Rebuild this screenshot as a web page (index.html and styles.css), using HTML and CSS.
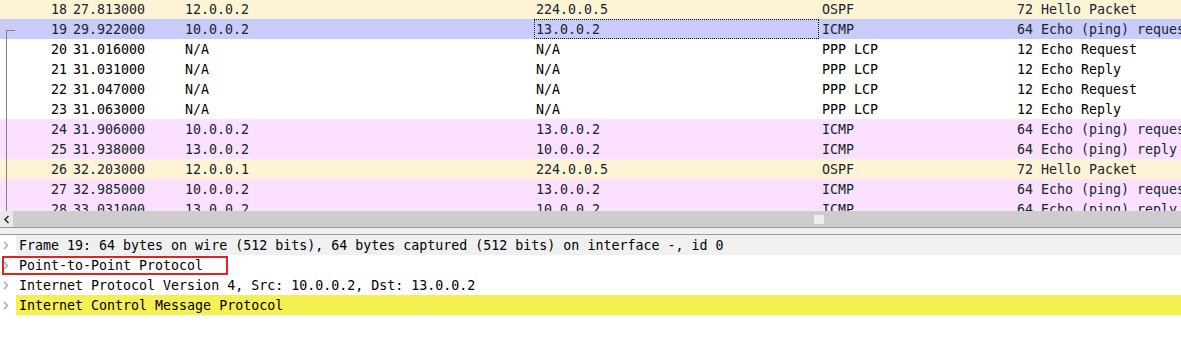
FILE: index.html
```html
<!DOCTYPE html>
<html lang="en">
<head>
    <meta charset="UTF-8">
    <title>Packet capture</title>
    <link rel="stylesheet" href="styles.css">
</head>
<body>
    <div class="packet-list">
        <div class="rows">
            <div class="pkt ospf"><span class="no">18</span><span>27.813000</span><span>12.0.0.2</span><span class="dst">224.0.0.5</span><span>OSPF</span><span class="len">72</span><span class="info">Hello Packet</span></div>
            <div class="pkt selected"><span class="no">19</span><span>29.922000</span><span>10.0.0.2</span><span class="dst focus">13.0.0.2</span><span>ICMP</span><span class="len">64</span><span class="info">Echo (ping) request  id=0x0001, seq=1/256, ttl=255</span></div>
            <div class="pkt"><span class="no">20</span><span>31.016000</span><span>N/A</span><span class="dst">N/A</span><span>PPP LCP</span><span class="len">12</span><span class="info">Echo Request</span></div>
            <div class="pkt"><span class="no">21</span><span>31.031000</span><span>N/A</span><span class="dst">N/A</span><span>PPP LCP</span><span class="len">12</span><span class="info">Echo Reply</span></div>
            <div class="pkt"><span class="no">22</span><span>31.047000</span><span>N/A</span><span class="dst">N/A</span><span>PPP LCP</span><span class="len">12</span><span class="info">Echo Request</span></div>
            <div class="pkt"><span class="no">23</span><span>31.063000</span><span>N/A</span><span class="dst">N/A</span><span>PPP LCP</span><span class="len">12</span><span class="info">Echo Reply</span></div>
            <div class="pkt icmp"><span class="no">24</span><span>31.906000</span><span>10.0.0.2</span><span class="dst">13.0.0.2</span><span>ICMP</span><span class="len">64</span><span class="info">Echo (ping) request  id=0x0002, seq=2/512, ttl=255</span></div>
            <div class="pkt icmp"><span class="no">25</span><span>31.938000</span><span>13.0.0.2</span><span class="dst">10.0.0.2</span><span>ICMP</span><span class="len">64</span><span class="info">Echo (ping) reply    id=0x0002, seq=2/512, ttl=254</span></div>
            <div class="pkt ospf"><span class="no">26</span><span>32.203000</span><span>12.0.0.1</span><span class="dst">224.0.0.5</span><span>OSPF</span><span class="len">72</span><span class="info">Hello Packet</span></div>
            <div class="pkt icmp"><span class="no">27</span><span>32.985000</span><span>10.0.0.2</span><span class="dst">13.0.0.2</span><span>ICMP</span><span class="len">64</span><span class="info">Echo (ping) request  id=0x0003, seq=3/768, ttl=255</span></div>
            <div class="pkt icmp"><span class="no">28</span><span>33.031000</span><span>13.0.0.2</span><span class="dst">10.0.0.2</span><span>ICMP</span><span class="len">64</span><span class="info">Echo (ping) reply    id=0x0003, seq=3/768, ttl=254</span></div>
        </div>
        <div class="related"></div>
    </div>

    <div class="hscroll">
        <div class="arrow-btn">
            <svg width="8" height="9" viewBox="0 0 8 9"><path d="M5.5 1 L2 4.5 L5.5 8" fill="none" stroke="#333" stroke-width="1.6"/></svg>
        </div>
        <div class="track"><div class="thumb"></div></div>
    </div>

    <div class="splitter"></div>

    <div class="tree">
        <div class="node hover">
            <svg class="chev" width="6" height="9" viewBox="0 0 6 9"><path d="M1 1 L4.5 4.5 L1 8" fill="none" stroke="#a6a6a6" stroke-width="1.4"/></svg>
            <span>Frame 19: 64 bytes on wire (512 bits), 64 bytes captured (512 bits) on interface -, id 0</span>
        </div>
        <div class="node marked">
            <svg class="chev" width="6" height="9" viewBox="0 0 6 9"><path d="M1 1 L4.5 4.5 L1 8" fill="none" stroke="#a6a6a6" stroke-width="1.4"/></svg>
            <span>Point-to-Point Protocol</span>
        </div>
        <div class="node">
            <svg class="chev" width="6" height="9" viewBox="0 0 6 9"><path d="M1 1 L4.5 4.5 L1 8" fill="none" stroke="#a6a6a6" stroke-width="1.4"/></svg>
            <span>Internet Protocol Version 4, Src: 10.0.0.2, Dst: 13.0.0.2</span>
        </div>
        <div class="node current">
            <svg class="chev" width="6" height="9" viewBox="0 0 6 9"><path d="M1 1 L4.5 4.5 L1 8" fill="none" stroke="#a6a6a6" stroke-width="1.4"/></svg>
            <span class="label">Internet Control Message Protocol</span>
        </div>
    </div>
</body>
</html>
```

FILE: styles.css
```css
body {
    margin: 0;
    background: #fff;
    font-family: "DejaVu Sans Mono", "Liberation Mono", monospace;
    font-size: 13.3px;
    color: #000;
    width: 1181px;
    height: 364px;
    overflow: hidden;
}

/* packet list */
.packet-list {
    position: relative;
    height: 211px;
    overflow: hidden;
}
.rows {
    margin-top: -1px;
}
.pkt {
    display: grid;
    grid-template-columns: 70px 112px 352px 285px 120px 97px 1fr;
    height: 20px;
    line-height: 22px;
    white-space: pre;
}
.pkt span {
    overflow: hidden;
}
.pkt span:nth-child(2),
.pkt span:nth-child(3),
.pkt span:nth-child(5) {
    padding-left: 3px;
}
.pkt .no,
.pkt .len {
    text-align: right;
    padding-right: 3px;
}
.pkt .dst {
    padding-left: 2px;
}
.pkt .info {
    padding-left: 5px;
}
.pkt.ospf {
    background: #fff3d6;
    color: #12272e;
}
.pkt.icmp {
    background: #fce0ff;
    color: #12272e;
}
.pkt.selected {
    background: #c9cbfb;
    color: #12272e;
}
.pkt .focus {
    outline: 1px dotted #000;
    outline-offset: -1px;
}
.related {
    position: absolute;
    left: 6px;
    top: 30px;
    width: 8px;
    height: 200px;
    border-left: 1px solid #808080;
    border-top: 1px solid #808080;
}

/* horizontal scrollbar */
.hscroll {
    display: flex;
    height: 16px;
    background: #cdcdcd;
}
.arrow-btn {
    width: 13px;
    display: flex;
    align-items: center;
    justify-content: center;
    background: #e9e9e9;
}
.track {
    flex: 1;
    position: relative;
}
.thumb {
    position: absolute;
    left: 801px;
    top: 4px;
    width: 10px;
    height: 9px;
    background: #efefef;
}

.splitter {
    height: 6px;
    background: #f0f0f0;
    border-top: 1px solid #9a9a9a;
    border-bottom: 1px solid #9a9a9a;
}

/* details tree */
.node {
    position: relative;
    display: flex;
    align-items: flex-start;
    height: 20px;
    white-space: nowrap;
}
.node .chev {
    width: 6px;
    margin: 0 8px 0 3px;
    flex: none;
    align-self: center;
}
.node span {
    margin-left: 2px;
    line-height: 22px;
}
.node.hover {
    background: linear-gradient(to right, #fff 16px, #f0f0f0 16px);
}
.node.current {
    background: linear-gradient(to right, #fff 16px, #f5f052 16px);
}
.node.marked::after {
    content: "";
    position: absolute;
    left: 2px;
    top: 1px;
    width: 222px;
    height: 15px;
    border: 2px solid #e5231e;
}
```
